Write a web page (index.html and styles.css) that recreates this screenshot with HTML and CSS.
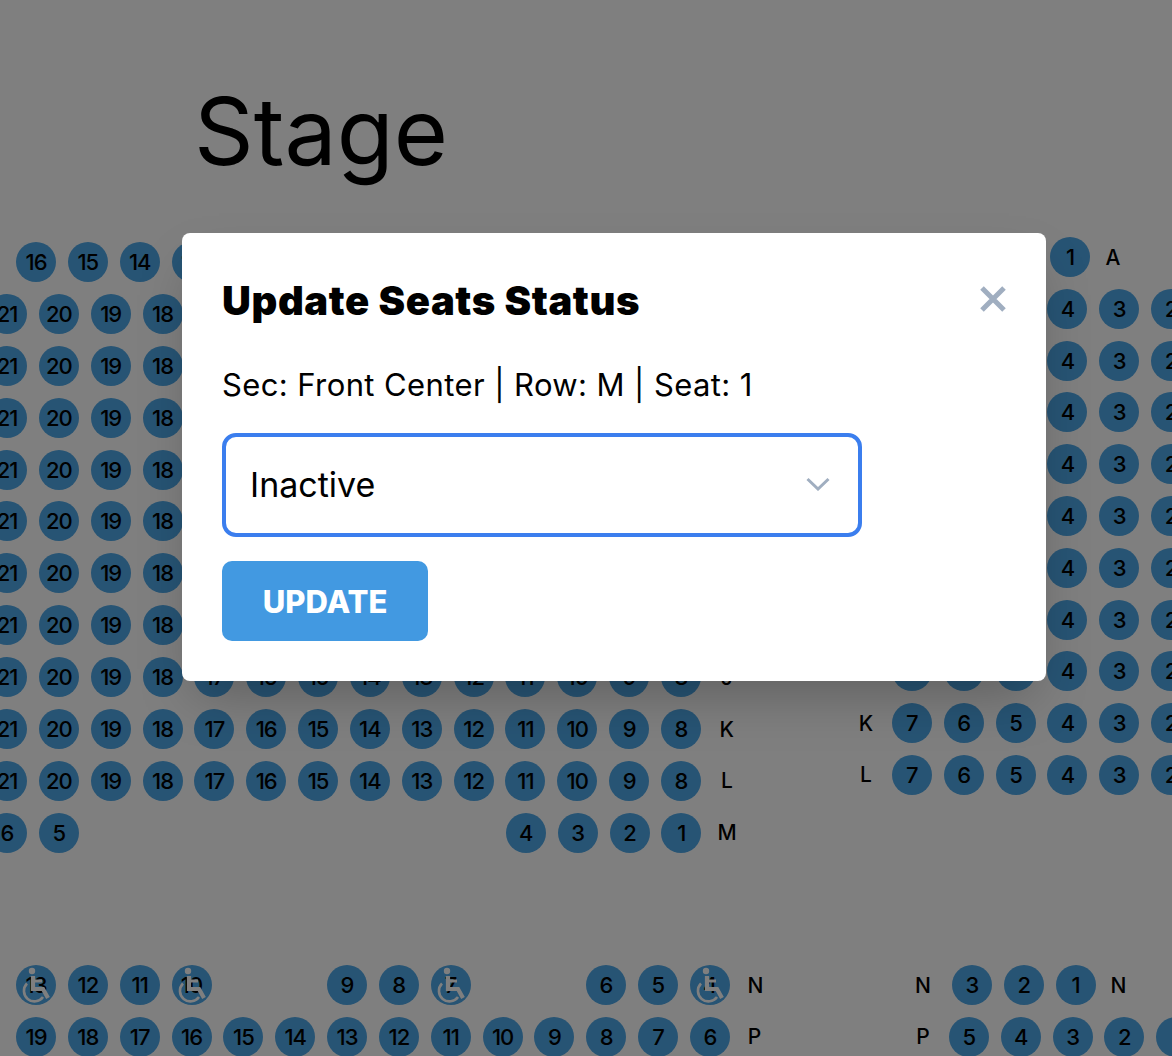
FILE: index.html
```html
<!DOCTYPE html>
<html lang="en">
<head>
    <meta charset="UTF-8">
    <meta name="viewport" content="width=device-width, initial-scale=1.0">
    <title>Update Seats Status</title>
    <link rel="stylesheet" href="styles.css">
</head>
<body>
    <svg class="icon-defs" width="0" height="0" aria-hidden="true">
        <symbol id="wheelchair" viewBox="0 0 40 40">
            <circle cx="16" cy="6" r="3.2" fill="#fff"/>
            <path d="M17 11V24H27L32 33" fill="none" stroke="#fff" stroke-width="4.2"/>
            <path d="M17 16H26" fill="none" stroke="#fff" stroke-width="3"/>
            <path d="M11 18.5A10.5 10.5 0 1 0 27 32" fill="none" stroke="#fff" stroke-width="2.6"/>
        </symbol>
    </svg>

    <div class="page">
        <h1 class="stage">Stage</h1>

        <div class="front-sections">
            <div class="section section-left">
                <div class="row row-a">
                    <span class="seat">16</span><span class="seat">15</span><span class="seat">14</span><span class="seat">13</span><span class="seat">12</span><span class="seat">11</span><span class="seat">10</span><span class="seat">9</span><span class="seat">8</span><span class="seat">7</span><span class="seat">6</span><span class="seat">5</span><span class="seat">4</span><span class="seat">3</span><span class="seat">2</span><span class="seat">1</span>
                </div>
                <div class="row">
                    <span class="seat">21</span><span class="seat">20</span><span class="seat">19</span><span class="seat">18</span><span class="seat">17</span><span class="seat">16</span><span class="seat">15</span><span class="seat">14</span><span class="seat">13</span><span class="seat">12</span><span class="seat">11</span><span class="seat">10</span><span class="seat">9</span><span class="seat">8</span><span class="label">B</span>
                </div>
                <div class="row">
                    <span class="seat">21</span><span class="seat">20</span><span class="seat">19</span><span class="seat">18</span><span class="seat">17</span><span class="seat">16</span><span class="seat">15</span><span class="seat">14</span><span class="seat">13</span><span class="seat">12</span><span class="seat">11</span><span class="seat">10</span><span class="seat">9</span><span class="seat">8</span><span class="label">C</span>
                </div>
                <div class="row">
                    <span class="seat">21</span><span class="seat">20</span><span class="seat">19</span><span class="seat">18</span><span class="seat">17</span><span class="seat">16</span><span class="seat">15</span><span class="seat">14</span><span class="seat">13</span><span class="seat">12</span><span class="seat">11</span><span class="seat">10</span><span class="seat">9</span><span class="seat">8</span><span class="label">D</span>
                </div>
                <div class="row">
                    <span class="seat">21</span><span class="seat">20</span><span class="seat">19</span><span class="seat">18</span><span class="seat">17</span><span class="seat">16</span><span class="seat">15</span><span class="seat">14</span><span class="seat">13</span><span class="seat">12</span><span class="seat">11</span><span class="seat">10</span><span class="seat">9</span><span class="seat">8</span><span class="label">E</span>
                </div>
                <div class="row">
                    <span class="seat">21</span><span class="seat">20</span><span class="seat">19</span><span class="seat">18</span><span class="seat">17</span><span class="seat">16</span><span class="seat">15</span><span class="seat">14</span><span class="seat">13</span><span class="seat">12</span><span class="seat">11</span><span class="seat">10</span><span class="seat">9</span><span class="seat">8</span><span class="label">F</span>
                </div>
                <div class="row">
                    <span class="seat">21</span><span class="seat">20</span><span class="seat">19</span><span class="seat">18</span><span class="seat">17</span><span class="seat">16</span><span class="seat">15</span><span class="seat">14</span><span class="seat">13</span><span class="seat">12</span><span class="seat">11</span><span class="seat">10</span><span class="seat">9</span><span class="seat">8</span><span class="label">G</span>
                </div>
                <div class="row">
                    <span class="seat">21</span><span class="seat">20</span><span class="seat">19</span><span class="seat">18</span><span class="seat">17</span><span class="seat">16</span><span class="seat">15</span><span class="seat">14</span><span class="seat">13</span><span class="seat">12</span><span class="seat">11</span><span class="seat">10</span><span class="seat">9</span><span class="seat">8</span><span class="label">H</span>
                </div>
                <div class="row">
                    <span class="seat">21</span><span class="seat">20</span><span class="seat">19</span><span class="seat">18</span><span class="seat">17</span><span class="seat">16</span><span class="seat">15</span><span class="seat">14</span><span class="seat">13</span><span class="seat">12</span><span class="seat">11</span><span class="seat">10</span><span class="seat">9</span><span class="seat">8</span><span class="label">J</span>
                </div>
                <div class="row">
                    <span class="seat">21</span><span class="seat">20</span><span class="seat">19</span><span class="seat">18</span><span class="seat">17</span><span class="seat">16</span><span class="seat">15</span><span class="seat">14</span><span class="seat">13</span><span class="seat">12</span><span class="seat">11</span><span class="seat">10</span><span class="seat">9</span><span class="seat">8</span><span class="label">K</span>
                </div>
                <div class="row">
                    <span class="seat">21</span><span class="seat">20</span><span class="seat">19</span><span class="seat">18</span><span class="seat">17</span><span class="seat">16</span><span class="seat">15</span><span class="seat">14</span><span class="seat">13</span><span class="seat">12</span><span class="seat">11</span><span class="seat">10</span><span class="seat">9</span><span class="seat">8</span><span class="label">L</span>
                </div>
                <div class="row">
                    <span class="seat">6</span><span class="seat">5</span><span class="gap-8"></span><span class="seat">4</span><span class="seat">3</span><span class="seat">2</span><span class="seat">1</span><span class="label">M</span>
                </div>
            </div>

            <div class="section section-right">
                <div class="row row-right-a">
                    <span class="seat">1</span><span class="label label-tail">A</span>
                </div>
                <div class="row">
                    <span class="label">B</span><span class="seat">7</span><span class="seat">6</span><span class="seat">5</span><span class="seat">4</span><span class="seat">3</span><span class="seat">2</span>
                </div>
                <div class="row">
                    <span class="label">C</span><span class="seat">7</span><span class="seat">6</span><span class="seat">5</span><span class="seat">4</span><span class="seat">3</span><span class="seat">2</span>
                </div>
                <div class="row">
                    <span class="label">D</span><span class="seat">7</span><span class="seat">6</span><span class="seat">5</span><span class="seat">4</span><span class="seat">3</span><span class="seat">2</span>
                </div>
                <div class="row">
                    <span class="label">E</span><span class="seat">7</span><span class="seat">6</span><span class="seat">5</span><span class="seat">4</span><span class="seat">3</span><span class="seat">2</span>
                </div>
                <div class="row">
                    <span class="label">F</span><span class="seat">7</span><span class="seat">6</span><span class="seat">5</span><span class="seat">4</span><span class="seat">3</span><span class="seat">2</span>
                </div>
                <div class="row">
                    <span class="label">G</span><span class="seat">7</span><span class="seat">6</span><span class="seat">5</span><span class="seat">4</span><span class="seat">3</span><span class="seat">2</span>
                </div>
                <div class="row">
                    <span class="label">H</span><span class="seat">7</span><span class="seat">6</span><span class="seat">5</span><span class="seat">4</span><span class="seat">3</span><span class="seat">2</span>
                </div>
                <div class="row">
                    <span class="label">J</span><span class="seat">7</span><span class="seat">6</span><span class="seat">5</span><span class="seat">4</span><span class="seat">3</span><span class="seat">2</span>
                </div>
                <div class="row">
                    <span class="label">K</span><span class="seat">7</span><span class="seat">6</span><span class="seat">5</span><span class="seat">4</span><span class="seat">3</span><span class="seat">2</span>
                </div>
                <div class="row">
                    <span class="label">L</span><span class="seat">7</span><span class="seat">6</span><span class="seat">5</span><span class="seat">4</span><span class="seat">3</span><span class="seat">2</span>
                </div>
            </div>
        </div>

        <div class="rear-sections">
            <div class="section section-rear-left">
                <div class="row">
                    <span class="seat">13<svg class="seat-icon"><use href="#wheelchair"/></svg></span><span class="seat">12</span><span class="seat">11</span><span class="seat">10<svg class="seat-icon"><use href="#wheelchair"/></svg></span><span class="gap-2"></span><span class="seat">9</span><span class="seat">8</span><span class="seat">7<svg class="seat-icon"><use href="#wheelchair"/></svg></span><span class="gap-2"></span><span class="seat">6</span><span class="seat">5</span><span class="seat">4<svg class="seat-icon"><use href="#wheelchair"/></svg></span><span class="label label-start">N</span>
                </div>
                <div class="row">
                    <span class="seat">19</span><span class="seat">18</span><span class="seat">17</span><span class="seat">16</span><span class="seat">15</span><span class="seat">14</span><span class="seat">13</span><span class="seat">12</span><span class="seat">11</span><span class="seat">10</span><span class="seat">9</span><span class="seat">8</span><span class="seat">7</span><span class="seat">6</span><span class="label label-start">P</span>
                </div>
            </div>
            <div class="section section-rear-right">
                <div class="row">
                    <span class="label label-n">N</span><span class="seat">3</span><span class="seat">2</span><span class="seat">1</span><span class="label label-tail">N</span>
                </div>
                <div class="row">
                    <span class="label">P</span><span class="seat">5</span><span class="seat">4</span><span class="seat">3</span><span class="seat">2</span><span class="seat">1</span>
                </div>
            </div>
        </div>
    </div>

    <div class="overlay">
        <div class="modal">
            <button class="close-button" aria-label="Close">
                <svg width="28" height="28" viewBox="0 0 28 28"><path d="M3 3L25 25M25 3L3 25" fill="none" stroke="#a0aec0" stroke-width="5"/></svg>
            </button>
            <h2 class="modal-title">Update Seats Status</h2>
            <p class="modal-info">Sec: Front Center | Row: M | Seat: 1</p>
            <div class="select-wrap">
                <select class="status-select">
                    <option>Inactive</option>
                    <option>Active</option>
                </select>
                <svg class="select-arrow" width="24" height="14" viewBox="0 0 24 14"><path d="M1.5 2L12 12L22.5 2" fill="none" stroke="#a0aec0" stroke-width="3"/></svg>
            </div>
            <button class="update-button">UPDATE</button>
        </div>
    </div>
</body>
</html>
```

FILE: styles.css
```css
html, body {
    margin: 0;
    padding: 0;
    height: 1056px;
    overflow: hidden;
}

body {
    font-family: Inter, "Liberation Sans", sans-serif;
    color: #000;
    background-color: #fff;
}

.icon-defs {
    display: block;
    height: 0;
}

.page {
    height: 1056px;
    overflow: hidden;
}

.stage {
    margin: 0 0 0 194px;
    height: 237px;
    padding-top: 78px;
    box-sizing: border-box;
    font-size: 93px;
    font-weight: 400;
    line-height: 106px;
}

.front-sections {
    display: flex;
    height: 616px;
    margin-left: -13px;
    gap: 111px;
}

.section {
    display: flex;
    flex-direction: column;
    gap: 11.9px;
    flex-shrink: 0;
}

.section-left {
    width: 754px;
    margin-top: 5px;
}

.section-right {
    width: 340px;
    gap: 11.8px;
}

.row {
    display: flex;
    gap: 11.85px;
    height: 40px;
    align-items: center;
}

.row-a {
    padding-left: 29px;
}

.row-right-a {
    padding-left: 198px;
}

.seat {
    position: relative;
    flex: 0 0 40px;
    width: 40px;
    height: 40px;
    border-radius: 50%;
    background-color: #4ea8e8;
    display: flex;
    align-items: center;
    justify-content: center;
    font-size: 22px;
    font-weight: 500;
    letter-spacing: -1px;
}

.seat-icon {
    position: absolute;
    inset: 0;
    width: 40px;
    height: 40px;
}

.label {
    flex: 0 0 28px;
    width: 28px;
    text-align: center;
    font-size: 21px;
    font-weight: 500;
}

.label-tail {
    flex-basis: 22px;
    width: 22px;
}

.label-start {
    text-align: left;
    padding-left: 6px;
    box-sizing: border-box;
}

.label-n {
    margin-right: 3px;
}

.gap-8 {
    flex: 0 0 403.3px;
}

.gap-2 {
    flex: 0 0 91.7px;
}

.rear-sections {
    display: flex;
    margin-left: 16px;
    margin-top: 112px;
    gap: 139px;
}

.section-rear-left {
    width: 754px;
}

.overlay {
    position: absolute;
    inset: 0;
    background-color: rgba(0, 0, 0, 0.5);
    padding: 233px 0 0 182px;
}

.modal {
    position: relative;
    width: 864px;
    box-sizing: border-box;
    padding: 40px;
    background-color: #fff;
    border-radius: 8px;
    box-shadow: 0 25px 50px -12px rgba(0, 0, 0, 0.25);
}

.close-button {
    position: absolute;
    top: 52px;
    right: 39px;
    padding: 0;
    border: none;
    background: none;
    display: flex;
}

.modal-title {
    margin: 0;
    font-size: 40px;
    font-weight: 900;
    line-height: 56px;
    letter-spacing: 0.6px;
}

.modal-info {
    margin: 32px 0 0;
    font-size: 31px;
    line-height: 48px;
    letter-spacing: 0.4px;
}

.select-wrap {
    position: relative;
    width: 640px;
    margin-top: 24px;
}

.status-select {
    display: block;
    width: 100%;
    height: 104px;
    box-sizing: border-box;
    padding: 0 24px 2px;
    border: 4px solid #3b7eee;
    border-radius: 14px;
    background-color: #fff;
    font-family: inherit;
    font-size: 34px;
    color: #000;
    appearance: none;
    outline: none;
}

.select-arrow {
    position: absolute;
    right: 32px;
    top: 44px;
}

.update-button {
    display: block;
    width: 206px;
    height: 80px;
    margin-top: 24px;
    border: none;
    border-radius: 10px;
    background-color: #4299e1;
    color: #fff;
    font-family: inherit;
    font-size: 31px;
    font-weight: 800;
}
```
